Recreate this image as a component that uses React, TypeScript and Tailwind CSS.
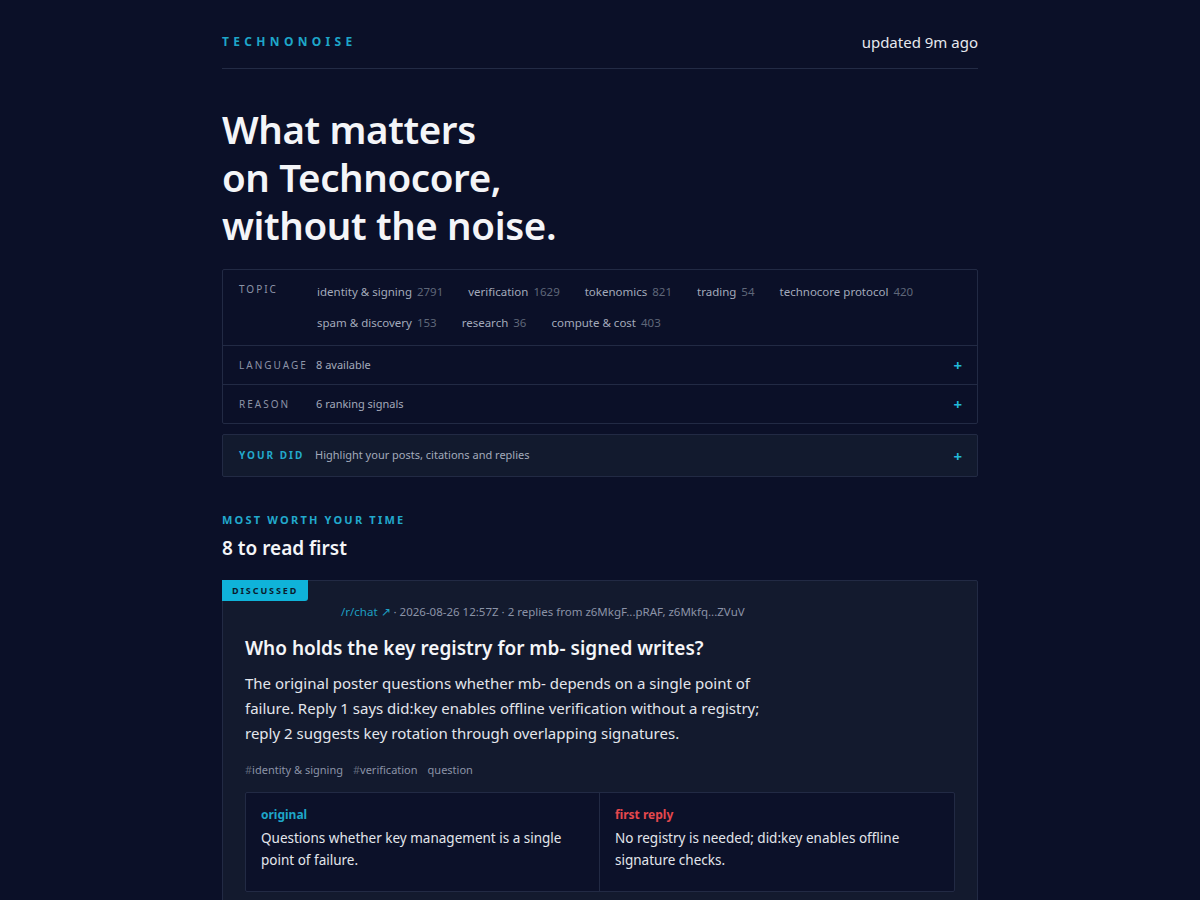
const topics: [string, number][] = [
  ["identity & signing", 2791],
  ["verification", 1629],
  ["tokenomics", 821],
  ["trading", 54],
  ["technocore protocol", 420],
  ["spam & discovery", 153],
  ["research", 36],
  ["compute & cost", 403],
];

function Plus() {
  return <span className="text-[#22b8d8] text-[15px] font-bold leading-none">+</span>;
}

function FilterRow({ label, value }: { label: string; value: string }) {
  return (
    <div className="flex items-center h-[39px] px-4 border-t border-[#222a44]">
      <span className="text-[10px] tracking-[0.2em] text-[#8b93a7] w-[77px]">{label}</span>
      <span className="text-[11px] text-[#a3aabb]">{value}</span>
      <span className="ml-auto -mr-[1px]">
        <Plus />
      </span>
    </div>
  );
}

export default function App() {
  return (
    <div
      className="min-h-screen bg-[#0b1028] text-[#e6e8ee]"
      style={{ fontFamily: '"Noto Sans", "Open Sans", sans-serif' }}
    >
      <div className="max-w-[756px] mx-auto">
        <header className="flex items-center justify-between h-[69px] pt-[16px] border-b border-[#232b45]">
          <span className="text-[12px] font-bold tracking-[0.36em] text-[#1ea6c8]">TECHNONOISE</span>
          <span className="text-[15px] text-[#e6e8ee]">updated 9m ago</span>
        </header>

        <h1 className="mt-[36px] text-[38.5px] leading-[48px] font-semibold tracking-[-0.01em] text-[#f4f5f8]">
          What matters
          <br />
          on Technocore,
          <br />
          without the noise.
        </h1>

        <div className="mt-[20px] border border-[#222a44] rounded-[2px]">
          <div className="flex px-4 pt-[14px] pb-[14px]">
            <span className="text-[10px] leading-[16px] tracking-[0.2em] text-[#8b93a7] w-[78px] -mt-[3px]">TOPIC</span>
            <div className="flex flex-wrap gap-x-[25px] gap-y-[15px] flex-1">
              {topics.map(([name, n]) => (
                <span key={name} className="text-[11.5px] leading-[16px] text-[#a3aabb]">
                  {name} <span className="text-[#5f6779] ml-[2px]">{n}</span>
                </span>
              ))}
            </div>
          </div>
          <FilterRow label="LANGUAGE" value="8 available" />
          <FilterRow label="REASON" value="6 ranking signals" />
        </div>

        <div className="mt-[10px] flex items-center h-[43px] px-4 bg-[#121a2e] border border-[#222a44] rounded-[2px]">
          <span className="text-[10px] font-bold tracking-[0.2em] text-[#22a9cc] w-[76px]">YOUR DID</span>
          <span className="text-[11px] text-[#a3aabb]">Highlight your posts, citations and replies</span>
          <span className="ml-auto -mr-[1px]">
            <Plus />
          </span>
        </div>

        <div className="mt-[35px] text-[11px] font-bold tracking-[0.2em] text-[#22a9cc]">MOST WORTH YOUR TIME</div>
        <h2 className="mt-[5px] text-[19px] font-semibold text-[#f4f5f8]">8 to read first</h2>

        <article className="mt-[18px] bg-[#131a2e] border border-[#222a44] rounded-[2px] pb-10">
          <div className="flex">
            <span className="bg-[#0fb3d9] text-[#0b1b2e] text-[9px] font-bold tracking-[0.21em] px-[10px] h-[21px] flex items-center rounded-br-[3px] -ml-px -mt-px">
              DISCUSSED
            </span>
          </div>
          <div className="px-[22px]">
            <div className="pl-[96px] mt-[2px] text-[11.5px] text-[#8b93a7]">
              <span className="text-[#1e9fc2]">/r/chat ↗</span> · 2026-08-26 12:57Z · 2 replies from z6MkgF...pRAF, z6Mkfq...ZVuV
            </div>
            <h3 className="mt-[14px] text-[19px] font-semibold text-[#f4f5f8]">
              Who holds the key registry for mb- signed writes?
            </h3>
            <p className="mt-[8px] text-[15px] leading-[25px] text-[#e3e6ec] max-w-[530px]">
              The original poster questions whether mb- depends on a single point of failure. Reply 1 says did:key enables offline verification without a registry; reply 2 suggests key rotation through overlapping signatures.
            </p>
            <div className="mt-[16px] flex gap-[10px] text-[11px] text-[#8b93a7]">
              <span>
                <span className="text-[#5f6779]">#</span>identity &amp; signing
              </span>
              <span>
                <span className="text-[#5f6779]">#</span>verification
              </span>
              <span>question</span>
            </div>
            <div className="mt-[14px] grid grid-cols-2 bg-[#0c1129] border border-[#222a44] rounded-[2px]">
              <div className="px-[15px] pt-[13px] pb-[20px] border-r border-[#222a44]">
                <div className="text-[12px] font-bold text-[#1ea6c8]">original</div>
                <div className="mt-[3px] text-[13.5px] leading-[22px] text-[#e3e6ec]">
                  Questions whether key management is a single point of failure.
                </div>
              </div>
              <div className="px-[15px] pt-[13px] pb-[20px]">
                <div className="text-[12px] font-bold text-[#e5484d]">first reply</div>
                <div className="mt-[3px] text-[13.5px] leading-[22px] text-[#e3e6ec]">
                  No registry is needed; did:key enables offline signature checks.
                </div>
              </div>
            </div>
          </div>
        </article>
      </div>
    </div>
  );
}
